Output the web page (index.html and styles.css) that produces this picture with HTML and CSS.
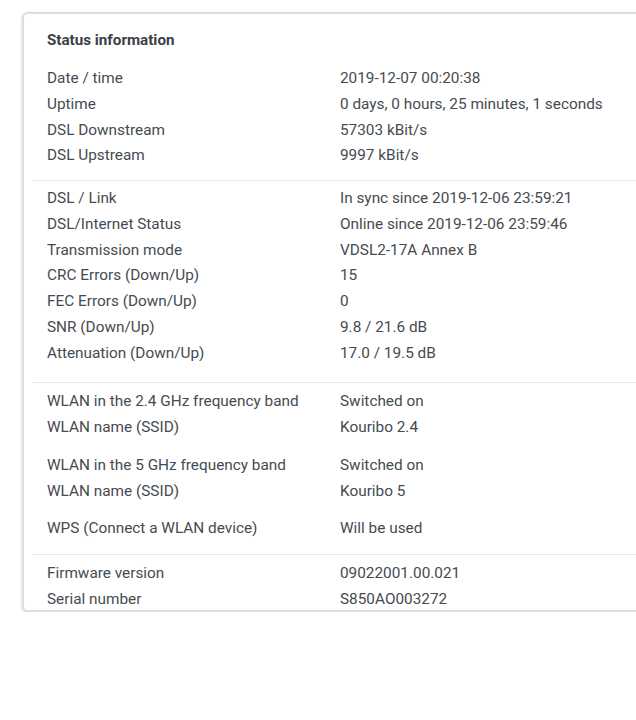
FILE: index.html
```
<!DOCTYPE html>
<html>
<head>
<meta charset="utf-8">
<link rel="stylesheet" href="styles.css">
</head>
<body>
<div class="card">
  <h2 class="title">Status information</h2>
  <div class="section s1">
    <div class="row"><span class="label">Date / time</span><span class="value">2019-12-07 00:20:38</span></div>
    <div class="row"><span class="label">Uptime</span><span class="value">0 days, 0 hours, 25 minutes, 1 seconds</span></div>
    <div class="row"><span class="label">DSL Downstream</span><span class="value">57303 kBit/s</span></div>
    <div class="row"><span class="label">DSL Upstream</span><span class="value">9997 kBit/s</span></div>
  </div>
  <div class="section s2">
    <div class="row"><span class="label">DSL / Link</span><span class="value">In sync since 2019-12-06 23:59:21</span></div>
    <div class="row"><span class="label">DSL/Internet Status</span><span class="value">Online since 2019-12-06 23:59:46</span></div>
    <div class="row"><span class="label">Transmission mode</span><span class="value">VDSL2-17A Annex B</span></div>
    <div class="row"><span class="label">CRC Errors (Down/Up)</span><span class="value">15</span></div>
    <div class="row"><span class="label">FEC Errors (Down/Up)</span><span class="value">0</span></div>
    <div class="row"><span class="label">SNR (Down/Up)</span><span class="value">9.8 / 21.6 dB</span></div>
    <div class="row"><span class="label">Attenuation (Down/Up)</span><span class="value">17.0 / 19.5 dB</span></div>
  </div>
  <div class="section s3">
    <div class="group">
      <div class="row"><span class="label">WLAN in the 2.4 GHz frequency band</span><span class="value">Switched on</span></div>
      <div class="row"><span class="label">WLAN name (SSID)</span><span class="value">Kouribo 2.4</span></div>
    </div>
    <div class="group">
      <div class="row"><span class="label">WLAN in the 5 GHz frequency band</span><span class="value">Switched on</span></div>
      <div class="row"><span class="label">WLAN name (SSID)</span><span class="value">Kouribo 5</span></div>
    </div>
    <div class="group">
      <div class="row"><span class="label">WPS (Connect a WLAN device)</span><span class="value">Will be used</span></div>
    </div>
  </div>
  <div class="section s4">
    <div class="row"><span class="label">Firmware version</span><span class="value">09022001.00.021</span></div>
    <div class="row"><span class="label">Serial number</span><span class="value">S850AO003272</span></div>
  </div>
</div>
</body>
</html>
```
FILE: styles.css
```
html, body {
  margin: 0;
  padding: 0;
  background: #ffffff;
  overflow-x: hidden;
}
body {
  font-family: Roboto, "Liberation Sans", sans-serif;
  color: #454a50;
  font-size: 15.35px;
}
.card {
  margin: 12px 0 0 22px;
  width: 660px;
  height: 600px;
  box-sizing: border-box;
  border: 2px solid #dedede;
  border-radius: 6px;
  box-shadow: 0 1px 3px rgba(0, 0, 0, 0.18);
  padding: 0 0 0 8px;
  background: #fff;
}
.title {
  margin: 0;
  padding: 13px 0 0 15px;
  font-size: 15.2px;
  font-weight: 700;
  line-height: 26px;
  color: #3b4047;
}
.section {
  display: flex;
  flex-direction: column;
  padding-left: 15px;
}
.section + .section {
  border-top: 1px solid #e6e6e6;
}
.s1 { padding-top: 13px; padding-bottom: 11px; }
.s2 { padding-top: 5px; padding-bottom: 16px; }
.s3 { padding-top: 6px; padding-bottom: 12px; gap: 12px; }
.s4 { padding-top: 6px; }
.group {
  display: flex;
  flex-direction: column;
}
.row {
  display: grid;
  grid-template-columns: 293px 1fr;
  line-height: 25.75px;
  height: 25.75px;
  white-space: nowrap;
}
.label, .value {
  color: #464b51;
}
```
